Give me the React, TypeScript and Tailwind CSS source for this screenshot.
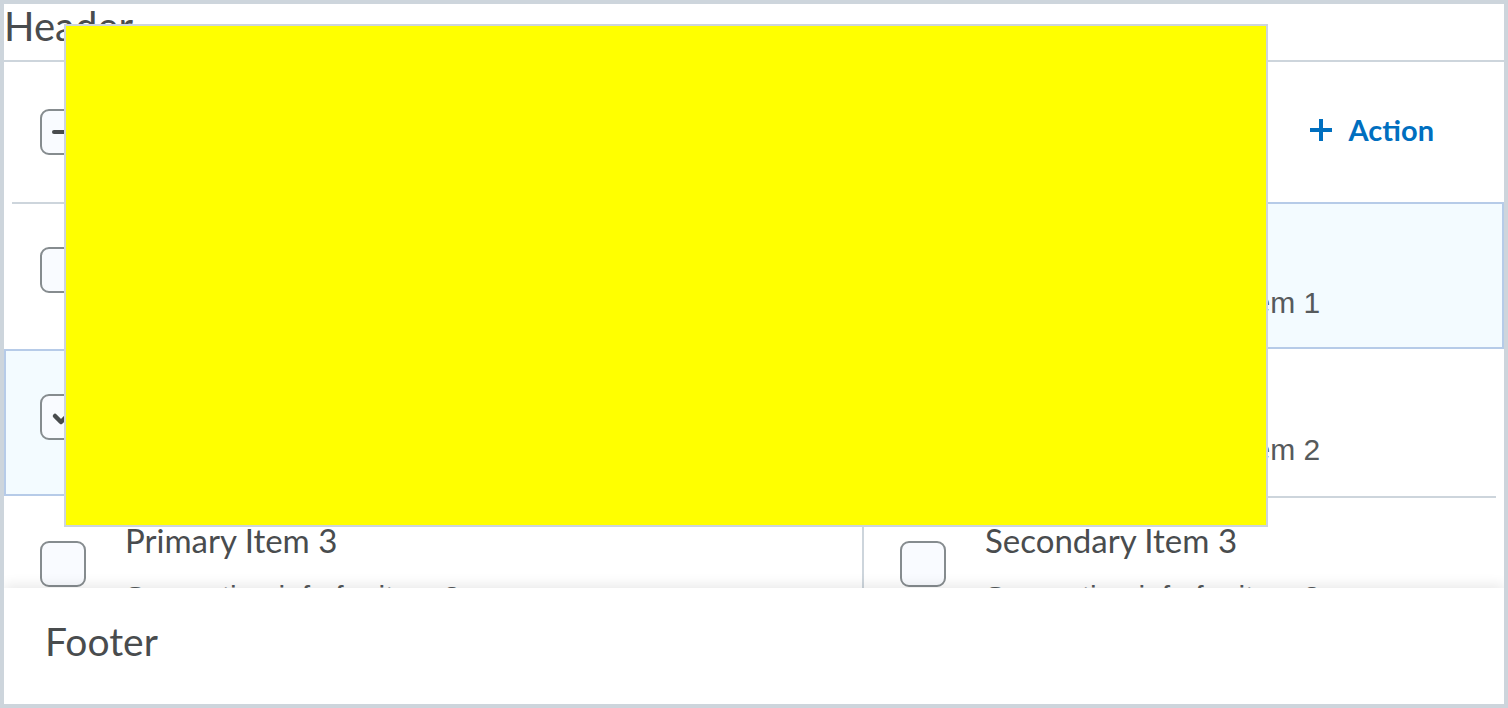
import React from "react";

type Row = {
    title: string;
    info: string;
    selected: boolean;
    sep: boolean;
};

const primary: Row[] = [
    { title: "Primary Item 1", info: "Supporting info for item 1", selected: false, sep: true },
    { title: "Primary Item 2", info: "Supporting info for item 2", selected: true, sep: false },
    { title: "Primary Item 3", info: "Supporting info for item 3", selected: false, sep: false },
];

const secondary: Row[] = [
    { title: "Secondary Item 1", info: "Supporting info for item 1", selected: true, sep: false },
    { title: "Secondary Item 2", info: "Supporting info for item 2", selected: false, sep: false },
    { title: "Secondary Item 3", info: "Supporting info for item 3", selected: false, sep: true },
];

const Checkbox = ({ state }: { state: "off" | "on" | "mixed" }) => {
    return (
        <div className="flex h-[46px] w-[46px] shrink-0 items-center justify-center rounded-[9px] border-2 border-[#868c8f] bg-[#f9fbff]">
            {state === "mixed" && (
                <svg width="24" height="24" viewBox="0 0 24 24">
                    <path d="M3 12h13" stroke="#494c4e" strokeWidth="4" strokeLinecap="round" />
                </svg>
            )}
            {state === "on" && (
                <svg width="26" height="26" viewBox="0 0 26 26">
                    <path d="M5 12l6 6 10-10" fill="none" stroke="#494c4e" strokeWidth="4.5" strokeLinecap="round" strokeLinejoin="round" />
                </svg>
            )}
        </div>
    );
};

const Item = ({ row }: { row: Row }) => {
    const outer = row.selected
        ? "h-[147px] border-2 border-[#b6cbe8] bg-[#f3fbff]"
        : "h-[147px] px-2";
    const inner = row.selected
        ? "flex h-full pl-[34px]"
        : row.sep
        ? "flex h-full border-t-2 border-[#cdd5dc] pl-[28px]"
        : "flex h-full border-t-2 border-transparent pl-[28px]";

    return (
        <div className={outer}>
            <div className={inner}>
                <div className="mt-[43px]">
                    <Checkbox state={row.selected ? "on" : "off"} />
                </div>
                <div className="ml-[39px] pt-[24px]">
                    <div className="text-[33px] leading-[36px] whitespace-nowrap">{row.title}</div>
                    <div className="mt-[21px] font-[Liberation_Sans,Arial,sans-serif] text-[30px] leading-[36px] whitespace-nowrap text-[#565a5c]">
                        {row.info}
                    </div>
                </div>
            </div>
        </div>
    );
};

export default function App() {
    return (
        <div className="relative flex h-[708px] w-full flex-col overflow-hidden border-4 border-[#cdd5dc] bg-white font-[Lato,sans-serif] text-[#494c4e]">
            <header className="h-[58px] shrink-0 border-b-2 border-[#cdd5dc] text-[40px] leading-[44px]">
                Header
            </header>

            <main className="min-h-0 flex-1 overflow-hidden">
                <div className="flex h-[140px] items-center justify-between pl-[36px] pr-[70px]">
                    <Checkbox state="mixed" />
                    <button className="-mt-[4px] flex items-center gap-[16px] text-[29px] font-bold text-[#006fbf]">
                        <svg width="24" height="24" viewBox="0 0 24 24">
                            <path d="M12 1v22M1 12h22" stroke="#006fbf" strokeWidth="4" />
                        </svg>
                        Action
                    </button>
                </div>

                <div className="grid grid-cols-[860px_1fr]">
                    <div className="border-r-2 border-[#cdd5dc]">
                        {primary.map((row, i) => (
                            <Item key={i} row={row} />
                        ))}
                    </div>
                    <div>
                        {secondary.map((row, i) => (
                            <Item key={i} row={row} />
                        ))}
                    </div>
                </div>
            </main>

            <footer className="relative z-10 h-[116px] shrink-0 bg-white pl-[41px] pt-[30px] text-[39px] leading-[46px] shadow-[0_-3px_12px_rgba(0,0,0,0.09)]">
                Footer
            </footer>

            {/* popover stand-in */}
            <div className="absolute left-[60px] top-[20px] z-20 h-[503px] w-[1204px] border-2 border-[#cdd5dc] bg-[#ffff00]" />
        </div>
    );
}
